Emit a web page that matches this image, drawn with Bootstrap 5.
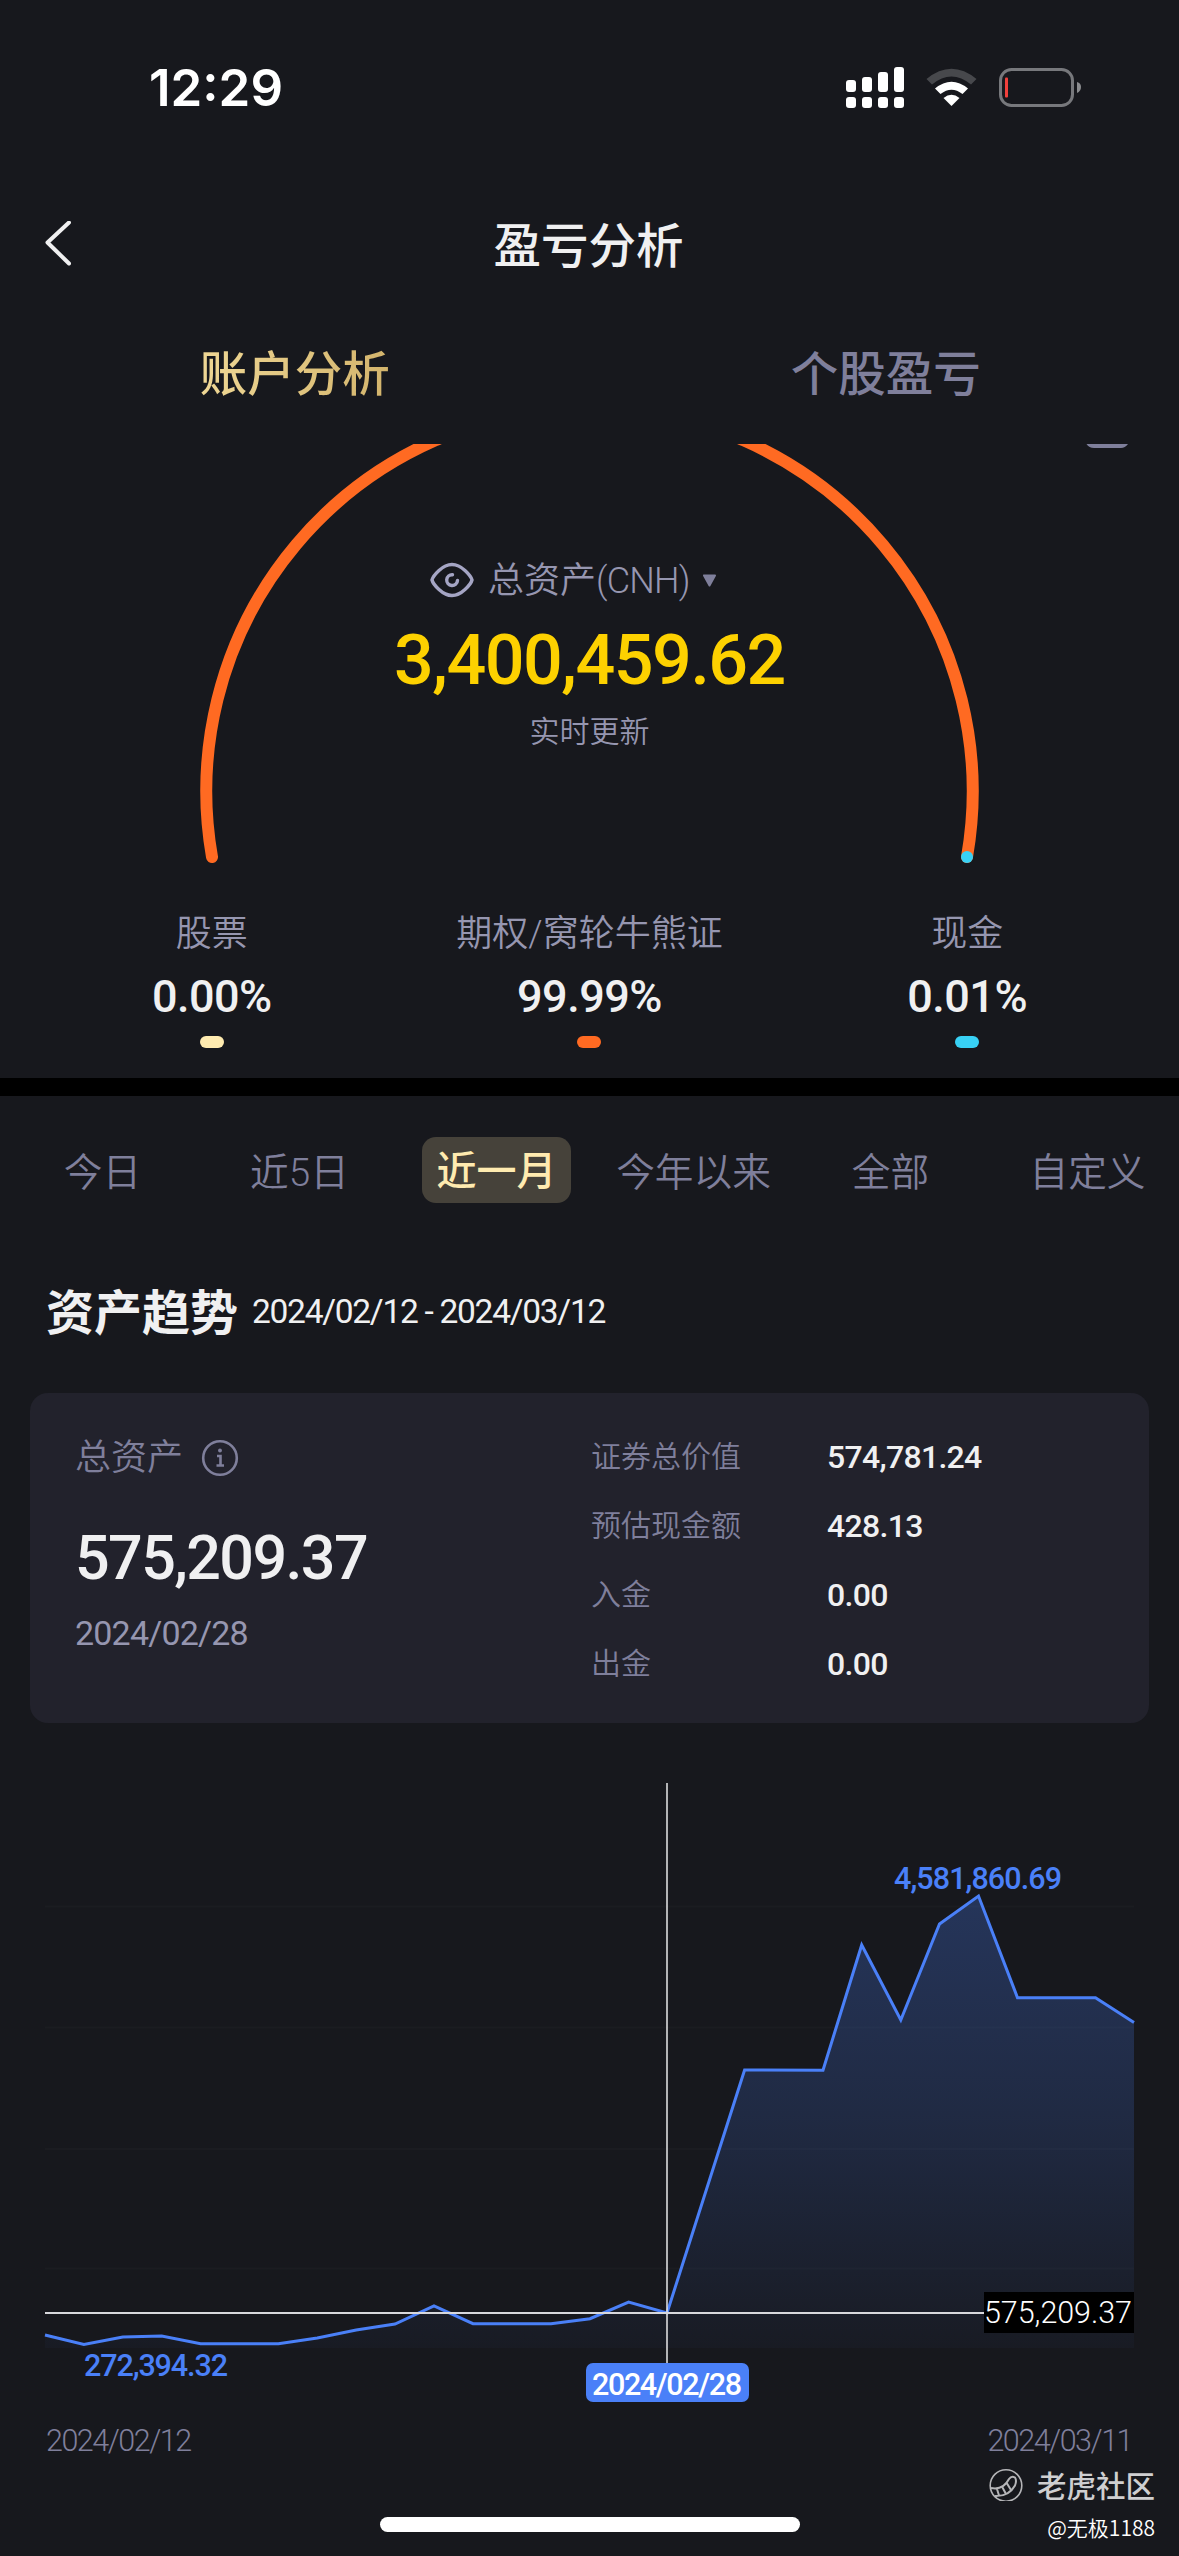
<!DOCTYPE html>
<html lang="zh-CN">
<head>
<meta charset="utf-8">
<meta name="viewport" content="width=device-width, initial-scale=1">
<title>盈亏分析</title>
<link href="https://cdn.jsdelivr.net/npm/bootstrap@5.3.0/dist/css/bootstrap.min.css" rel="stylesheet">
<style>
  body { background:#17181d; color:#f0f0f1; font-family:Roboto,"Noto Sans CJK SC",sans-serif; width:1179px; height:2556px; overflow:hidden; }
  svg { display:block; flex:none; }
  .dim { color:#7f7f9b; font-weight:350; }
  .soft { color:#9696b0; font-weight:350; }
  .status-bar { height:176px; padding:0 97px 0 149px; }
  .clock { font:600 51px/60px Inter,sans-serif; color:#fff; }
  .title-bar { height:138px; display:grid; grid-template-columns:1fr auto 1fr; padding:0 45px 0 43px; }
  .page-title { font-size:47.5px; font-weight:500; line-height:60px; padding-top:3px; }
  .main-tabs { height:130px; font-size:47.5px; line-height:60px; padding:5px 0 14px; font-weight:500; }
  .tab-on { background:linear-gradient(90deg,#efd795,#d3b46c); -webkit-background-clip:text; background-clip:text; color:transparent; }
  .tab-off { color:#7f7f9b; padding-left:3px; }
  .gauge { height:426px; }
  .gauge > * { grid-area:1/1; }
  .gauge-text { padding-top:116px; }
  .asset-label { padding-left:430px; height:40px; font-size:36px; line-height:40px; }
  .asset-label span { padding-top:1px; }
  .asset-label > span { margin-left:14px; }
  .asset-label .ccy { letter-spacing:-.8px; }
  .asset-total { color:#fdd100; font-size:70px; font-weight:500; line-height:80px; letter-spacing:-1.5px; margin-top:20px; }
  .asset-note { font-size:30px; line-height:40px; margin-top:12px; }
  .legend-row { height:208px; padding:42px 23px 0; }
  .legend-name { font-size:36px; line-height:44px; }
  .legend-val { font-size:45px; font-weight:500; line-height:50px; letter-spacing:-.5px; margin-top:16px; }
  .legend-dot { width:24px; height:12px; border-radius:6px; margin:14px auto 0; }
  .split { height:18px; background:#000; }
  .periods { height:152px; width:1182px; margin-left:4px; font-size:38.7px; line-height:66px; padding-top:2px; }
  .period-on { background:#46423a; color:#ffebb0; font-weight:500; font-size:40px; border-radius:14px; width:149px; height:66px; line-height:70px; margin-top:-6px; }
  .trend-head { height:128px; padding-left:46px; }
  .trend-title { font-size:48px; font-weight:700; line-height:60px; padding-top:4px; }
  .trend-range { font-size:33.5px; line-height:60px; letter-spacing:-1.28px; margin-left:14px; font-weight:400; }
  .summary { height:330px; margin:17px 30px 0; border-radius:18px; background:#22222c; padding-left:45px; }
  .sum-left { width:516px; padding-top:45px; }
  .sum-label { font-size:36px; line-height:42px; height:40px; }
  .sum-total { font-size:61px; font-weight:500; line-height:70px; letter-spacing:-1.6px; margin-top:45px; }
  .sum-date { font-size:34px; line-height:40px; letter-spacing:-.8px; margin-top:20px; color:#9696b0; }
  .sum-right { padding-top:29px; }
  .sum-row { height:69px; font-size:30px; }
  .sum-row .dim { width:236px; }
  .sum-val { font-size:32px; font-weight:500; letter-spacing:-.7px; }
  .axis { height:60px; padding:2px 47px 0 46px; font-size:30.5px; letter-spacing:-1.5px; }
  .foot { height:86px; padding-right:24px; }
  .home-bar { left:380px; top:47px; width:420px; height:15px; border-radius:8px; background:#fff; }
  .mark-name { font:500 29.5px/32px "Noto Sans CJK SC",sans-serif; color:#cfcfd1; margin-top:-3px; gap:14px; }
  .mark-user { font:350 21px/30px "Noto Sans CJK SC",sans-serif; color:#fff; margin-top:11px; }
</style>
</head>
<body>
  <header class="status-bar d-flex align-items-center justify-content-between">
    <div class="clock">12:29</div>
    <svg width="237" height="44" viewBox="845 66 237 44">
      <g fill="#fff">
        <rect x="846" y="80" width="10" height="12" rx="3"/><rect x="862" y="77" width="10" height="15" rx="3"/><rect x="878" y="72" width="10" height="20" rx="3"/><rect x="894" y="67" width="10" height="25" rx="3"/>
        <rect x="846" y="97" width="10" height="11" rx="3"/><rect x="862" y="97" width="10" height="11" rx="3"/><rect x="878" y="97" width="10" height="11" rx="3"/><rect x="894" y="97" width="10" height="11" rx="3"/>
      </g>
      <path d="M926.5 79 Q951.500 58.500 976.500 79 L971 84.500 Q951.500 68.500 932 84.500Z" fill="#47484c"/>
      <path d="M935 88.500 Q951.500 75 968 88.500 L962.500 94 Q951.500 85.500 940.500 94Z" fill="#fff"/>
      <path d="M943.500 98 Q951.500 91.500 959.500 98 L951.500 106Z" fill="#fff"/>
      <rect x="1000.500" y="69.500" width="72" height="36" rx="11" fill="none" stroke="#77787c" stroke-width="3"/>
      <path d="M1077 82 Q1081 83 1081 87 Q1081 91 1077 93Z" fill="#8b8c8f"/>
      <rect x="1005" y="77.500" width="3" height="20" rx="1" fill="#f2403c"/>
    </svg>
  </header>

  <nav class="title-bar align-items-center">
    <svg width="28" height="48" viewBox="0 0 28 48" fill="none" stroke="#f0f0f1" stroke-width="4" stroke-linecap="round" stroke-linejoin="round"><path d="M26 1.500 L4.500 21.500 L26 42.500"/></svg>
    <div class="page-title">盈亏分析</div>
  </nav>

  <div class="main-tabs row g-0 align-items-center text-center">
    <div class="col-6"><span class="tab-on">账户分析</span></div>
    <div class="col-6"><span class="tab-off">个股盈亏</span></div>
  </div>

  <section class="gauge d-grid">
    <svg width="1179" height="426" viewBox="0 444 1179 426">
      <path d="M212 857 A383.200 383.200 0 1 1 967 857" fill="none" stroke="#ff6a22" stroke-width="12" stroke-linecap="round"/>
      <circle cx="967" cy="857" r="6" fill="#38d1f5"/>
      <path d="M1086.500 444 H1128 Q1125 448 1121 448 H1094 Q1089 448 1086.500 444Z" fill="#7f7f9b"/>
    </svg>
    <div class="gauge-text text-center">
      <div class="asset-label soft d-flex align-items-center">
        <svg width="44" height="36" viewBox="0 0 44 36" fill="none" stroke="#a5a5c4" stroke-width="3.400" stroke-linecap="round"><path d="M2 18 Q3 14 9 8.500 Q22 -3.500 35 8.500 Q41 14 42 18 Q41 22 35 27.500 Q22 39.500 9 27.500 Q3 22 2 18Z"/><path d="M22.500 12.700 A5.400 5.400 0 1 0 27.500 18.500"/></svg>
        <span>总资产<span class="ccy">(CNH)</span></span>
        <svg class="ms-2" width="19" height="14" viewBox="-4 0 19 14"><path d="M2 2.500H13L7.500 12.500Z" fill="#7f7f9b" stroke="#7f7f9b" stroke-width="2" stroke-linejoin="round"/></svg>
      </div>
      <div class="asset-total">3,400,459.62</div>
      <div class="asset-note soft">实时更新</div>
    </div>
  </section>

  <section class="legend-row">
    <div class="row g-0 text-center">
      <div class="col-4"><div class="legend-name soft">股票</div><div class="legend-val">0.00%</div><div class="legend-dot" style="background:#ffebb0"></div></div>
      <div class="col-4"><div class="legend-name soft">期权/窝轮牛熊证</div><div class="legend-val">99.99%</div><div class="legend-dot" style="background:#ff6a22"></div></div>
      <div class="col-4"><div class="legend-name soft">现金</div><div class="legend-val">0.01%</div><div class="legend-dot" style="background:#38d1f5"></div></div>
    </div>
  </section>
  <div class="split"></div>

  <div class="periods row g-0 align-items-center text-center dim flex-nowrap">
    <div class="col-2">今日</div>
    <div class="col-2">近5日</div>
    <div class="col-2"><div class="period-on mx-auto">近一月</div></div>
    <div class="col-2">今年以来</div>
    <div class="col-2">全部</div>
    <div class="col-2">自定义</div>
  </div>

  <div class="trend-head d-flex align-items-center">
    <div class="trend-title">资产趋势</div>
    <div class="trend-range">2024/02/12 - 2024/03/12</div>
  </div>

  <section class="summary d-flex">
    <div class="sum-left">
      <div class="sum-label dim d-flex align-items-center">总资产
        <svg style="margin-left:18px" width="38" height="38" viewBox="0 0 38 38" fill="none" stroke="#7f7f9b" stroke-width="2.600"><circle cx="19" cy="19" r="16.800"/><path d="M16 17H19.500V26.500M15.500 26.500H23"/><circle cx="19" cy="11.500" r="1.200" fill="#7f7f9b" stroke-width="1.500"/></svg>
      </div>
      <div class="sum-total">575,209.37</div>
      <div class="sum-date">2024/02/28</div>
    </div>
    <div class="sum-right">
      <div class="sum-row d-flex align-items-center"><span class="dim">证券总价值</span><span class="sum-val">574,781.24</span></div>
      <div class="sum-row d-flex align-items-center"><span class="dim">预估现金额</span><span class="sum-val">428.13</span></div>
      <div class="sum-row d-flex align-items-center"><span class="dim">入金</span><span class="sum-val">0.00</span></div>
      <div class="sum-row d-flex align-items-center"><span class="dim">出金</span><span class="sum-val">0.00</span></div>
    </div>
  </section>

  <svg width="1179" height="687" viewBox="0 1723 1179 687" font-family="Roboto, sans-serif">
    <defs>
      <linearGradient id="area" x1="0" y1="1895" x2="0" y2="2348" gradientUnits="userSpaceOnUse">
        <stop offset="0" stop-color="#4a80f8" stop-opacity=".28"/><stop offset=".5" stop-color="#4a80f8" stop-opacity=".17"/><stop offset="1" stop-color="#4a80f8" stop-opacity=".03"/>
      </linearGradient>
    </defs>
    <path d="M45 1906.500H1134M45 2027.500H1134M45 2149H1134M45 2268.500H1134" stroke="#1b1c21" stroke-width="2"/>
    <path d="M45 2335L83.900 2344.500L122.800 2337L161.700 2336L200.600 2343.700H278.400L317.300 2338L356.200 2330L395 2324L434 2306L473 2323.700H551L590 2318.700L628.600 2302L667 2313L744.600 2070L823 2070.200L861.700 1945L900.800 2020L939.500 1924L978.500 1896L1017.500 1997.700H1095.500L1134 2022.500V2348H45Z" fill="url(#area)"/>
    <path d="M45 2335L83.900 2344.500L122.800 2337L161.700 2336L200.600 2343.700H278.400L317.300 2338L356.200 2330L395 2324L434 2306L473 2323.700H551L590 2318.700L628.600 2302L667 2313L744.600 2070L823 2070.200L861.700 1945L900.800 2020L939.500 1924L978.500 1896L1017.500 1997.700H1095.500L1134 2022.500" fill="none" stroke="#4a80f8" stroke-width="3"/>
    <path d="M667 1783V2364" stroke="#e8e8ea" stroke-width="1.500"/>
    <path d="M45 2313H984" stroke="#d8d8dc" stroke-width="2"/>
    <rect x="984" y="2292" width="150" height="41" fill="#000"/>
    <rect x="586" y="2363" width="163" height="39" rx="7" fill="#4a80f8"/>
    <g font-size="30.500">
      <text x="894" y="1889" textLength="168" fill="#4a80f8" font-weight="500">4,581,860.69</text>
      <text x="84" y="2376" textLength="144" fill="#4a80f8" font-weight="500">272,394.32</text>
      <text x="984" y="2323" textLength="148" fill="#fff" font-weight="350">575,209.37</text>
      <text x="592" y="2395" textLength="150" fill="#fff" font-weight="500">2024/02/28</text>
    </g>
  </svg>
  <div class="axis dim d-flex align-items-center justify-content-between"><span>2024/02/12</span><span>2024/03/11</span></div>

  <footer class="foot position-relative d-flex flex-column align-items-end">
    <div class="home-bar position-absolute"></div>
    <div class="mark-name d-flex align-items-center">
      <svg width="34" height="34" viewBox="0 -1.500 34 34" fill="none" stroke="#b5b5b8" stroke-width="1.600"><circle cx="17" cy="17" r="15.800"/><path stroke-width="2" d="M2 19.500Q14 22 20 10.500Q22.500 7 26 9Q28 12 26 17Q20 28 6 27.500M8 20.500L10 27M13.500 19L17 25.500M18 15L22 21.500"/></svg>老虎社区
    </div>
    <div class="mark-user">@无极1188</div>
  </footer>
<script src="https://cdn.jsdelivr.net/npm/bootstrap@5.3.0/dist/js/bootstrap.bundle.min.js"></script>
</body>
</html>
